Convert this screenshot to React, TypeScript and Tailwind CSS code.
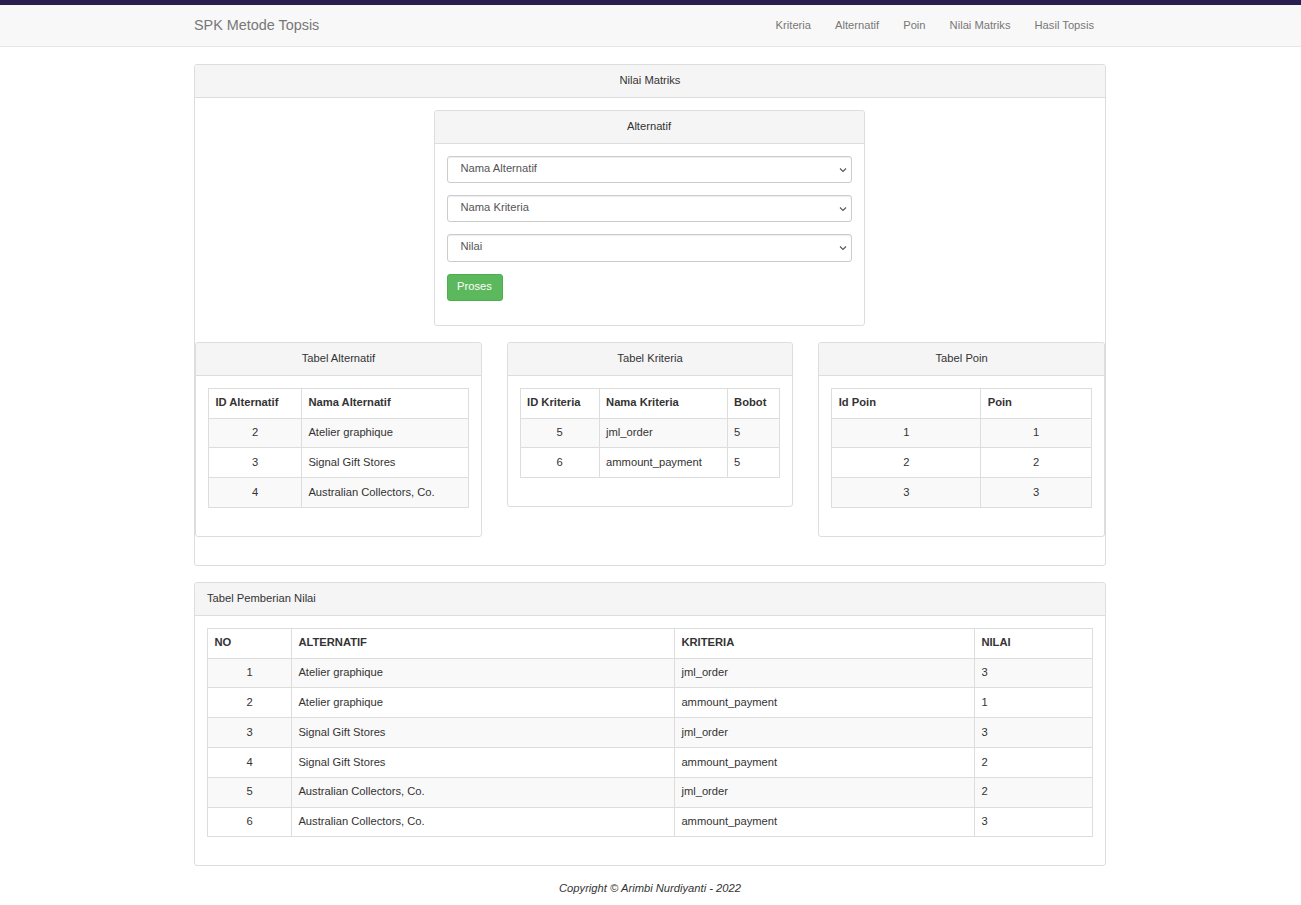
import React from "react";

function Panel({
  title,
  center = true,
  className = "",
  children,
}: {
  title: string;
  center?: boolean;
  className?: string;
  children: React.ReactNode;
}) {
  return (
    <div className={"rounded-[3px] border border-[#dddddd] bg-white " + className}>
      <div
        className={
          "rounded-t-[3px] border-b border-[#dddddd] bg-[#f5f5f5] px-[12px] pb-[9px] pt-[7px] leading-[16px] text-[#333333] " +
          (center ? "text-center" : "text-left")
        }
      >
        {title}
      </div>
      <div className="p-[12px]">{children}</div>
    </div>
  );
}

type Col = { label: string; w: string; center?: boolean };

function DataTable({ cols, rows }: { cols: Col[]; rows: string[][] }) {
  return (
    <table className="mb-[16px] w-full table-fixed border-collapse border border-[#dddddd]">
      <thead>
        <tr>
          {cols.map((c) => (
            <th
              key={c.label}
              className={
                "border border-[#dddddd] px-[6.4px] pb-[7.2px] pt-[5.6px] text-left font-bold leading-[16px] text-[#333333] " +
                c.w
              }
            >
              {c.label}
            </th>
          ))}
        </tr>
      </thead>
      <tbody>
        {rows.map((r, i) => (
          <tr key={i} className={i % 2 === 0 ? "bg-[#f9f9f9]" : "bg-white"}>
            {r.map((v, j) => (
              <td
                key={j}
                className={
                  "border border-[#dddddd] px-[6.4px] pb-[7.2px] pt-[5.6px] leading-[16px] text-[#333333] " +
                  (cols[j].center ? "text-center" : "text-left")
                }
              >
                {v}
              </td>
            ))}
          </tr>
        ))}
      </tbody>
    </table>
  );
}

function FakeSelect({ label }: { label: string }) {
  return (
    <div className="mb-[12px] flex h-[27.2px] items-center justify-between rounded-[3px] border border-[#cccccc] bg-white pl-[13px] pr-[4px] text-[#555555] shadow-[inset_0_1px_1px_rgba(0,0,0,0.075)]">
      <span className="-mt-[4px] leading-[16px]">{label}</span>
      <svg width="8" height="6" viewBox="0 0 8 6" className="mt-[1px]">
        <path d="M1 1.5 L4 4.5 L7 1.5" fill="none" stroke="#555" strokeWidth="1.1" />
      </svg>
    </div>
  );
}

export default function App() {
  const navLinks = ["Kriteria", "Alternatif", "Poin", "Nilai Matriks", "Hasil Topsis"];
  return (
    <div className="min-h-[905px] bg-white font-['Liberation_Sans',Arial,sans-serif] text-[11.2px] text-[#333333]">
      <div className="h-[5px] bg-[#2a1d50]" />
      <nav className="h-[42px] border-b border-[#e7e7e7] bg-[#f8f8f8]">
        <div className="mx-auto flex h-full w-[937px] items-center justify-between pb-[2px] pl-[12px] pr-[13px]">
          <span className="text-[14.4px] leading-[16px] text-[#777777]">SPK Metode Topsis</span>
          <div className="flex">
            {navLinks.map((l) => (
              <span key={l} className="px-[12px] leading-[16px] text-[#777777]">
                {l}
              </span>
            ))}
          </div>
        </div>
      </nav>

      <div className="mx-auto mt-[17px] w-[937px] pl-[12px] pr-[13px]">
        <Panel title="Nilai Matriks" className="mb-[16px]">
          <div className="flex justify-center pr-[2px]">
            <Panel title="Alternatif" className="mb-[16px] w-[431px]">
              <FakeSelect label="Nama Alternatif" />
              <FakeSelect label="Nama Kriteria" />
              <FakeSelect label="Nilai" />
              <div className="mb-[12px]">
                <button className="h-[27.2px] rounded-[3px] border border-[#4cae4c] bg-[#5cb85c] px-[9.6px] pb-[2px] leading-[16px] text-white">
                  Proses
                </button>
              </div>
            </Panel>
          </div>
          <div className="-mx-[12px] grid grid-cols-3 items-start gap-[25px]">
            <Panel title="Tabel Alternatif" className="mb-[16px]">
              <DataTable
                cols={[
                  { label: "ID Alternatif", w: "w-[93px]", center: true },
                  { label: "Nama Alternatif", w: "w-auto" },
                ]}
                rows={[
                  ["2", "Atelier graphique"],
                  ["3", "Signal Gift Stores"],
                  ["4", "Australian Collectors, Co."],
                ]}
              />
            </Panel>
            <Panel title="Tabel Kriteria" className="mb-[16px]">
              <DataTable
                cols={[
                  { label: "ID Kriteria", w: "w-[79px]", center: true },
                  { label: "Nama Kriteria", w: "w-[128px]" },
                  { label: "Bobot", w: "w-auto" },
                ]}
                rows={[
                  ["5", "jml_order", "5"],
                  ["6", "ammount_payment", "5"],
                ]}
              />
            </Panel>
            <Panel title="Tabel Poin" className="mb-[16px]">
              <DataTable
                cols={[
                  { label: "Id Poin", w: "w-[149px]", center: true },
                  { label: "Poin", w: "w-auto", center: true },
                ]}
                rows={[
                  ["1", "1"],
                  ["2", "2"],
                  ["3", "3"],
                ]}
              />
            </Panel>
          </div>
        </Panel>

        <Panel title="Tabel Pemberian Nilai" center={false} className="mb-[16px]">
          <DataTable
            cols={[
              { label: "NO", w: "w-[84px]", center: true },
              { label: "ALTERNATIF", w: "w-[383px]" },
              { label: "KRITERIA", w: "w-[300px]" },
              { label: "NILAI", w: "w-auto" },
            ]}
            rows={[
              ["1", "Atelier graphique", "jml_order", "3"],
              ["2", "Atelier graphique", "ammount_payment", "1"],
              ["3", "Signal Gift Stores", "jml_order", "3"],
              ["4", "Signal Gift Stores", "ammount_payment", "2"],
              ["5", "Australian Collectors, Co.", "jml_order", "2"],
              ["6", "Australian Collectors, Co.", "ammount_payment", "3"],
            ]}
          />
        </Panel>

        <footer className="-mt-[2px] text-center italic leading-[16px] text-[#333333]">
          Copyright © Arimbi Nurdiyanti - 2022
        </footer>
      </div>
    </div>
  );
}
